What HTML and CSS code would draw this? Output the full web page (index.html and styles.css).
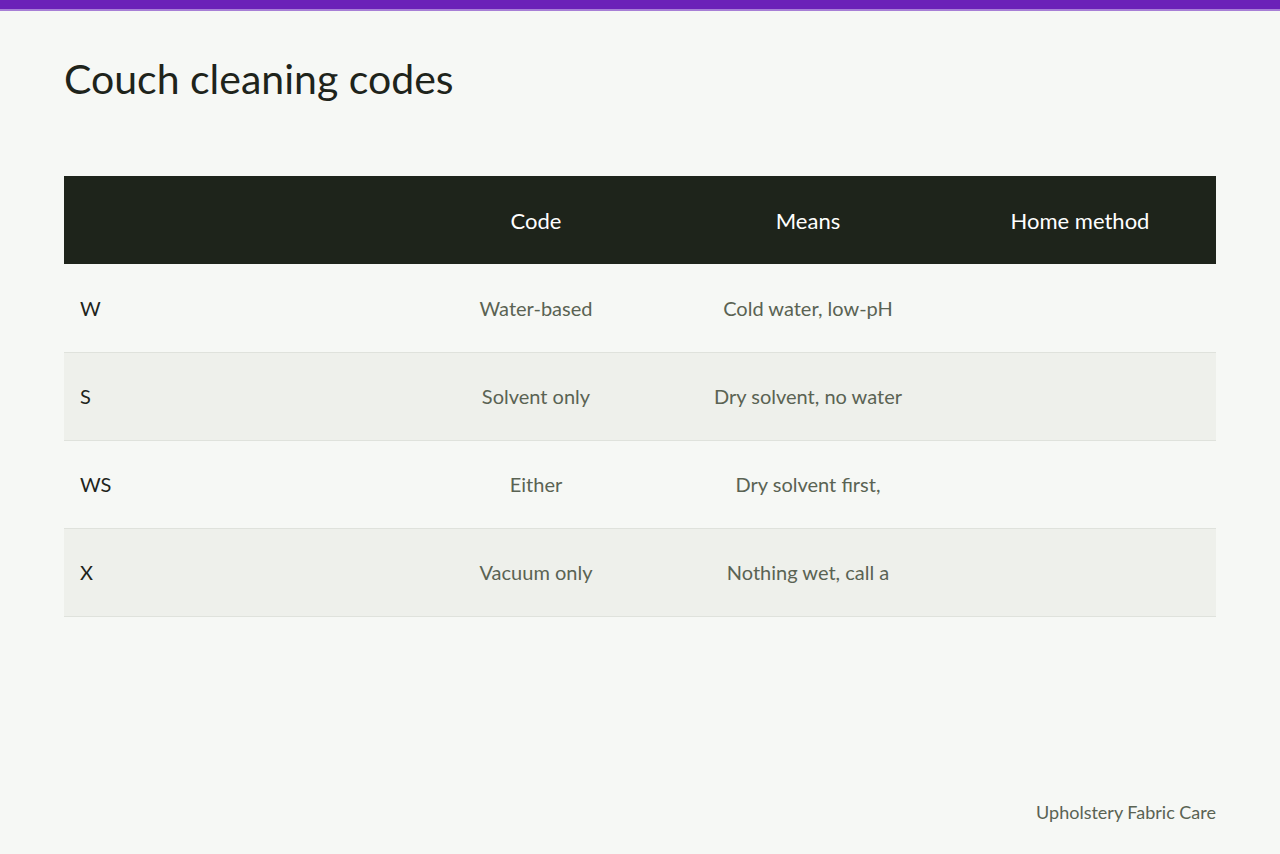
FILE: index.html
```html
<!DOCTYPE html>
<html lang="en">
<head>
<meta charset="utf-8">
<title>Couch cleaning codes</title>
<link rel="stylesheet" href="styles.css">
</head>
<body>
<div class="topbar"></div>
<main class="page">
  <h1 class="title">Couch cleaning codes</h1>
  <table class="codes">
    <thead>
      <tr><th class="c1"></th><th>Code</th><th>Means</th><th>Home method</th></tr>
    </thead>
    <tbody>
      <tr><td class="c1">W</td><td>Water-based</td><td>Cold water, low-pH</td><td></td></tr>
      <tr><td class="c1">S</td><td>Solvent only</td><td>Dry solvent, no water</td><td></td></tr>
      <tr><td class="c1">WS</td><td>Either</td><td>Dry solvent first,</td><td></td></tr>
      <tr><td class="c1">X</td><td>Vacuum only</td><td>Nothing wet, call a</td><td></td></tr>
    </tbody>
  </table>
  <footer class="foot">Upholstery Fabric Care</footer>
</main>
</body>
</html>
```
FILE: styles.css
```css
html, body {
  margin: 0;
  padding: 0;
}
body {
  background: #f6f8f5;
  font-family: "Lato", "Noto Sans", sans-serif;
  color: #1e241b;
  width: 1280px;
  height: 854px;
  overflow: hidden;
}
.topbar {
  height: 9px;
  background: #6b21b8;
  border-bottom: 2px solid #a77fd6;
}
.page {
  padding: 0 64px;
  height: 843px;
  display: flex;
  flex-direction: column;
}
.title {
  margin: 43px 0 0;
  font-weight: 400;
  font-size: 41px;
  line-height: 50px;
  color: #1e241b;
}
.codes {
  margin-top: 72px;
  width: 1152px;
  border-collapse: collapse;
  table-layout: fixed;
}
.codes th, .codes td {
  height: 88px;
  padding: 0 16px;
  text-align: center;
  box-sizing: border-box;
}
.codes th {
  background: #1e241b;
  color: #ffffff;
  font-weight: 400;
  font-size: 22px;
}
.codes th.c1 { width: 336px; }
.codes td {
  font-size: 20px;
  color: #5a6353;
  border-bottom: 1px solid #dfe2dc;
}
.codes td.c1 {
  text-align: left;
  color: #1e241b;
}
.codes tbody tr:nth-child(even) td {
  background: #eef0eb;
}
.foot {
  margin-top: auto;
  margin-bottom: 31px;
  text-align: right;
  font-size: 18px;
  color: #5a6353;
}
```
